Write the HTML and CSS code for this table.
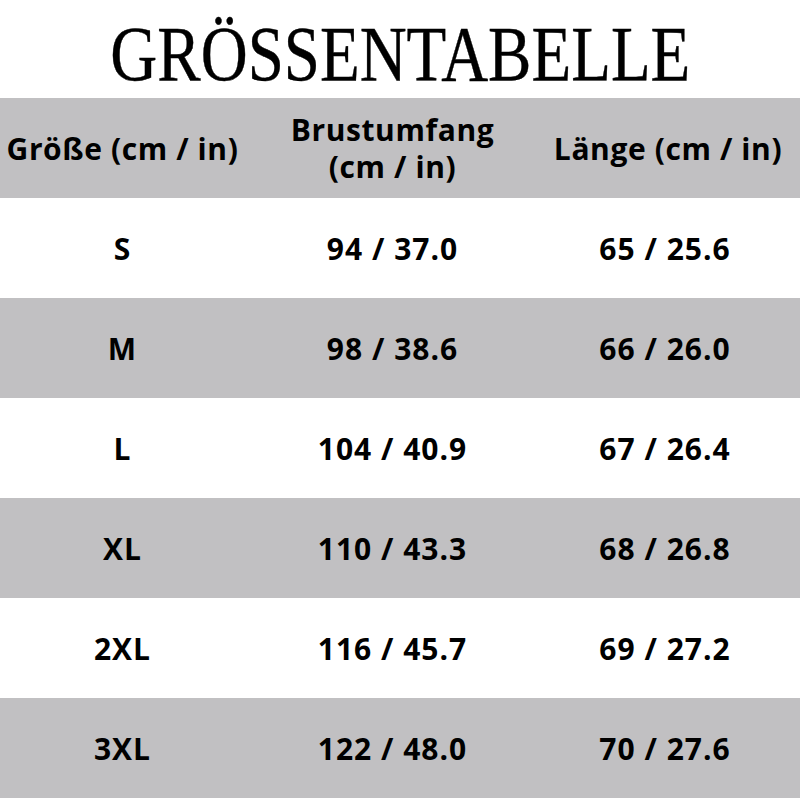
FILE: index.html
```html
<!DOCTYPE html>
<html lang="de">
<head>
<meta charset="utf-8">
<link rel="stylesheet" href="styles.css">
</head>
<body>
<div class="page">
  <div class="title-wrap"><h1 class="title">GRÖSSENTABELLE</h1></div>
  <div class="table">
    <div class="row head">
      <div class="cell">Größe (cm / in)</div>
      <div class="cell">Brustumfang<br>(cm / in)</div>
      <div class="cell">Länge (cm / in)</div>
    </div>
    <div class="row">
      <div class="cell">S</div><div class="cell">94 / 37.0</div><div class="cell">65 / 25.6</div>
    </div>
    <div class="row alt">
      <div class="cell">M</div><div class="cell">98 / 38.6</div><div class="cell">66 / 26.0</div>
    </div>
    <div class="row">
      <div class="cell">L</div><div class="cell">104 / 40.9</div><div class="cell">67 / 26.4</div>
    </div>
    <div class="row alt">
      <div class="cell">XL</div><div class="cell">110 / 43.3</div><div class="cell">68 / 26.8</div>
    </div>
    <div class="row">
      <div class="cell">2XL</div><div class="cell">116 / 45.7</div><div class="cell">69 / 27.2</div>
    </div>
    <div class="row alt">
      <div class="cell">3XL</div><div class="cell">122 / 48.0</div><div class="cell">70 / 27.6</div>
    </div>
  </div>
</div>
</body>
</html>
```

FILE: styles.css
```css
html, body {
  margin: 0;
  padding: 0;
  background: #ffffff;
}
.page {
  width: 800px;
  height: 800px;
  overflow: hidden;
  background: #ffffff;
}
.title-wrap {
  height: 98px;
  display: flex;
  justify-content: center;
  align-items: flex-start;
}
.title {
  margin: 0;
  font-family: "Liberation Serif", "Times New Roman", serif;
  font-weight: normal;
  font-size: 79px;
  line-height: 1;
  color: #000;
  display: inline-block;
  transform: scaleX(0.823);
  padding-top: 14px;
  -webkit-text-stroke: 0.4px #000;
}
.table {
  display: flex;
  flex-direction: column;
}
.row {
  display: grid;
  grid-template-columns: 245px 295px 250px 10px;
  height: 100px;
  font-family: "Open Sans", "Liberation Sans", sans-serif;
  font-weight: 700;
  font-size: 30px;
  letter-spacing: 1px;
  color: #000;
}
.row.head {
  background: #c1c0c2;
  line-height: 37px;
  letter-spacing: 0.6px;
}
.row.head .cell:last-child {
  margin-right: -6px;
}
.row.alt {
  background: #c1c0c2;
}
.cell {
  display: flex;
  align-items: center;
  justify-content: center;
  text-align: center;
}
```
